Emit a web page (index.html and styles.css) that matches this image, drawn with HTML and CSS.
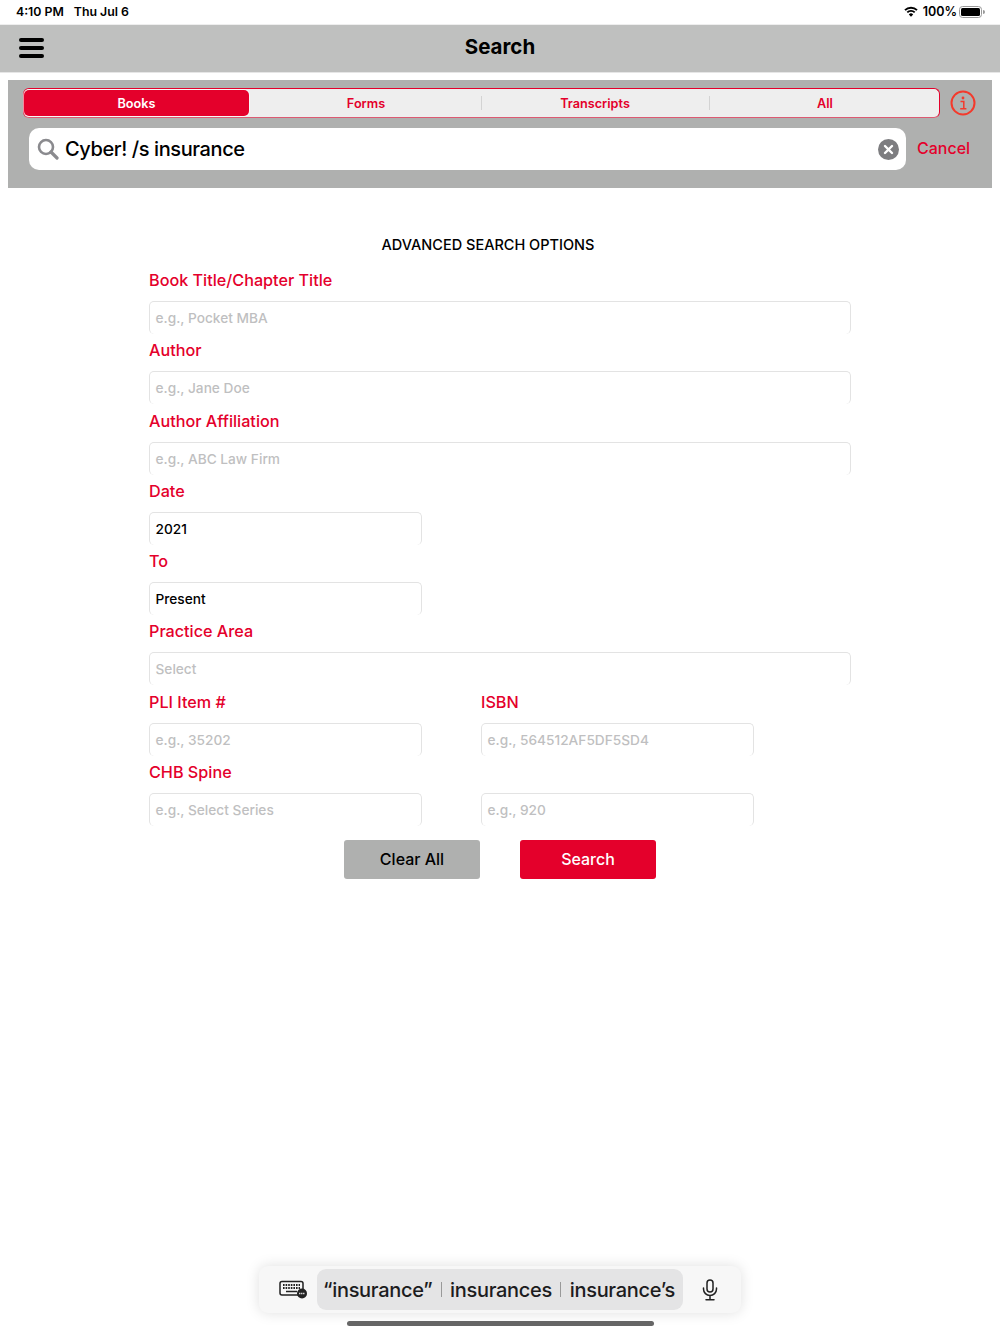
FILE: index.html
```html
<!DOCTYPE html>
<html lang="en">
  <head>
    <meta charset="UTF-8" />
    <meta name="viewport" content="width=device-width, initial-scale=1.0" />
    <title>Search</title>
    <link rel="stylesheet" href="styles.css">
  </head>
  <body>
    <div class="page">
      <div class="status-bar">
        <div class="status-left"><span>4:10 PM</span><span>Thu Jul 6</span></div>
        <div class="status-right">
          <svg class="wifi" width="14" height="11" viewBox="0 0 14 11">
            <path d="M1 4.2 A8.5 8.5 0 0 1 13 4.2" fill="none" stroke="#000" stroke-width="1.9"/>
            <path d="M3.3 6.4 A5.2 5.2 0 0 1 10.7 6.4" fill="none" stroke="#000" stroke-width="1.9"/>
            <path d="M7 10.8 L4.8 8.4 A3 3 0 0 1 9.2 8.4 Z" fill="#000"/>
          </svg>
          <span class="battery-text">100%</span>
          <svg class="battery" width="26" height="12" viewBox="0 0 26 12">
            <rect x="0.5" y="0.5" width="22" height="11" rx="3" fill="none" stroke="#999"/>
            <rect x="2" y="2" width="19" height="8" rx="1.5" fill="#000"/>
            <path d="M24 4 A2 2 0 0 1 24 8 Z" fill="#999"/>
          </svg>
        </div>
      </div>

      <div class="nav-bar">
        <div class="menu-icon"><span></span><span></span><span></span></div>
        <div class="nav-title">Search</div>
      </div>

      <div class="search-panel">
        <div class="tabs-row">
          <div class="tabs">
            <div class="tab active">Books</div>
            <div class="tab forms">Forms</div>
            <div class="tab divided">Transcripts</div>
            <div class="tab divided last">All</div>
          </div>
          <svg class="info-icon" width="26" height="26" viewBox="0 0 26 26">
            <circle cx="13" cy="13" r="11.5" fill="none" stroke="#f4392b" stroke-width="2"/>
            <circle cx="13" cy="8" r="1.4" fill="#f4392b"/>
            <path d="M10.5 11.5 H13.8 V18.5 M10.2 18.8 H16.4" fill="none" stroke="#f4392b" stroke-width="1.5"/>
          </svg>
        </div>
        <div class="search-row">
          <div class="search-field">
            <svg width="22" height="22" viewBox="0 0 22 22">
              <circle cx="9" cy="9" r="7" fill="none" stroke="#8a8a8e" stroke-width="2.6"/>
              <path d="M14 14 L20 20" stroke="#8a8a8e" stroke-width="3.2" stroke-linecap="round"/>
            </svg>
            <div class="search-text">Cyber! /s insurance</div>
            <svg width="21" height="21" viewBox="0 0 21 21">
              <circle cx="10.5" cy="10.5" r="10.5" fill="#7d7d80"/>
              <path d="M7 7 L14 14 M14 7 L7 14" stroke="#fff" stroke-width="2.4" stroke-linecap="round"/>
            </svg>
          </div>
          <div class="cancel">Cancel</div>
        </div>
      </div>

      <h1 class="adv-title">ADVANCED SEARCH OPTIONS</h1>

      <div class="adv-form">
        <div class="group full">
          <label>Book Title/Chapter Title</label>
          <div class="field placeholder">e.g., Pocket MBA</div>
        </div>
        <div class="group full">
          <label>Author</label>
          <div class="field placeholder">e.g., Jane Doe</div>
        </div>
        <div class="group full">
          <label>Author Affiliation</label>
          <div class="field placeholder">e.g., ABC Law Firm</div>
        </div>
        <div class="group">
          <label>Date</label>
          <div class="field">2021</div>
        </div>
        <div class="group">
          <label>To</label>
          <div class="field">Present</div>
        </div>
        <div class="group full">
          <label>Practice Area</label>
          <div class="field placeholder">Select</div>
        </div>
        <div class="pair">
          <div class="group">
            <label>PLI Item #</label>
            <div class="field placeholder">e.g., 35202</div>
          </div>
          <div class="group">
            <label>ISBN</label>
            <div class="field placeholder">e.g., 564512AF5DF5SD4</div>
          </div>
        </div>
        <div class="pair">
          <div class="group">
            <label>CHB Spine</label>
            <div class="field placeholder">e.g., Select Series</div>
          </div>
          <div class="group">
            <label>&nbsp;</label>
            <div class="field placeholder">e.g., 920</div>
          </div>
        </div>
      </div>

      <div class="actions">
        <button class="btn btn-clear">Clear All</button>
        <button class="btn btn-search">Search</button>
      </div>

      <div class="kb-bar">
        <svg width="30" height="20" viewBox="0 0 30 20">
          <rect x="1" y="1.5" width="23" height="13.5" rx="2" fill="none" stroke="#222" stroke-width="1.5"/>
          <path d="M4 5 H21 M4 8 H21" stroke="#222" stroke-width="1.8" stroke-dasharray="1.6 1"/>
          <path d="M7 11.5 H18" stroke="#222" stroke-width="1.5"/>
          <circle cx="23" cy="13.5" r="5" fill="#222"/>
          <path d="M20.2 13.5 H25.8" stroke="#fff" stroke-width="1.3" stroke-dasharray="1.2 .8"/>
        </svg>
        <div class="suggestions">
          <span>“insurance”</span>
          <i></i>
          <span>insurances</span>
          <i></i>
          <span>insurance’s</span>
        </div>
        <svg width="16" height="22" viewBox="0 0 16 22">
          <rect x="5" y="1" width="6" height="12" rx="3" fill="none" stroke="#222" stroke-width="1.5"/>
          <path d="M1.5 9 V10 A6.5 6.5 0 0 0 14.5 10 V9 M8 16.5 V20.5 M4 20.7 H12" fill="none" stroke="#222" stroke-width="1.5" stroke-linecap="round"/>
        </svg>
      </div>
      <div class="home-bar"></div>
    </div>
  </body>
</html>
```

FILE: styles.css
```css
body {
  margin: 0;
  font-family: Inter, "Liberation Sans", sans-serif;
  background-color: #fff;
  color: #000;
}

.page {
  height: 1334px;
  overflow: hidden;
  display: flex;
  flex-direction: column;
}

.status-bar {
  height: 24px;
  display: flex;
  justify-content: space-between;
  align-items: center;
  padding: 0 15px 1px 16px;
  box-sizing: border-box;
  font-size: 12.3px;
  font-weight: 600;
}

.status-left {
  display: flex;
  gap: 10px;
}

.status-right {
  display: flex;
  align-items: center;
  font-size: 12.5px;
}

.battery-text {
  margin: 0 2px 0 5px;
}

.nav-bar {
  height: 49px;
  background-color: #bfc0bf;
  border-top: 1px solid #eee;
  border-bottom: 1px solid #e6e6e6;
  box-sizing: border-box;
  display: flex;
  align-items: center;
  justify-content: center;
  position: relative;
}

.menu-icon {
  position: absolute;
  left: 19px;
  top: 13px;
  width: 25px;
  display: flex;
  flex-direction: column;
  gap: 4px;
}

.menu-icon span {
  height: 4px;
  background: #000;
  border-radius: 2px;
}

.nav-title {
  font-size: 20.5px;
  font-weight: 700;
  margin-bottom: 4px;
}

.search-panel {
  margin: 7px 8px 0;
  height: 108px;
  background-color: #afb0af;
  padding: 8px 0 0 15px;
  box-sizing: border-box;
}

.tabs-row {
  display: flex;
  align-items: center;
  gap: 10px;
}

.tabs {
  width: 917px;
  height: 30px;
  box-sizing: border-box;
  display: flex;
  background: #eeeeee;
  border: 1px solid #e4002b;
  border-bottom-color: #dc5a72;
  border-radius: 6px;
  padding: 1px 0;
}

.tab {
  flex: 1;
  display: flex;
  align-items: center;
  justify-content: center;
  color: #e4002b;
  font-size: 12.7px;
  font-weight: 600;
  position: relative;
}

.tab.forms {
  flex: 0 0 232px;
  box-sizing: border-box;
  padding-left: 2px;
}

.tab.last {
  padding-left: 2px;
}

.tab.active {
  flex: 0 0 225px;
  background: #e4002b;
  color: #fff;
  border-radius: 5px;
  box-shadow: 0 0 0 1px rgba(255, 255, 255, 0.55);
}

.tab.divided::before {
  content: "";
  position: absolute;
  left: 0;
  top: 6px;
  bottom: 6px;
  width: 1px;
  background: #d3d3d3;
}

.search-row {
  display: flex;
  align-items: center;
  margin: 10px 0 0 6px;
}

.search-field {
  width: 877px;
  height: 42px;
  box-sizing: border-box;
  background: #fff;
  border-radius: 10px;
  display: flex;
  align-items: center;
  padding: 0 7px 0 8px;
  gap: 6px;
}

.search-text {
  flex: 1;
  margin-bottom: 1px;
  font-size: 20px;
  font-weight: 500;
  letter-spacing: -0.4px;
}

.cancel {
  margin: 0 0 3px 11px;
  color: #e4002b;
  font-size: 16px;
  font-weight: 500;
}

.adv-title {
  margin: 48px 24px 0 0;
  text-align: center;
  font-size: 14.5px;
  line-height: 18px;
  font-weight: 500;
}

.adv-form {
  width: 702px;
  margin: 0 auto;
  display: flex;
  flex-direction: column;
  gap: 1.3px;
  padding-top: 11px;
}

.group {
  width: 273px;
}

.group.full {
  width: 702px;
}

.pair {
  display: flex;
  gap: 59px;
}

.group label {
  display: block;
  height: 36px;
  line-height: 31px;
  color: #e4002b;
  font-size: 16.2px;
  font-weight: 500;
}

.field {
  height: 33px;
  box-sizing: border-box;
  border: 1px solid #e3e3e3;
  border-bottom: none;
  border-radius: 5px;
  padding: 0 5.5px;
  line-height: 32px;
  font-size: 13.7px;
  font-weight: 500;
}

.field.placeholder {
  color: #bfbfc1;
}

.actions {
  display: flex;
  justify-content: center;
  gap: 40px;
  margin-top: 14px;
}

.btn {
  width: 136px;
  height: 39px;
  padding: 0 0 2px;
  border: none;
  border-radius: 3px;
  font-family: inherit;
  font-size: 16px;
  font-weight: 500;
}

.btn-clear {
  background-color: #afb0af;
  color: #000;
}

.btn-search {
  background-color: #e4002b;
  color: #fff;
}

.kb-bar {
  width: 482px;
  height: 47px;
  box-sizing: border-box;
  margin: auto auto 0;
  padding: 0 3px 0 20px;
  display: flex;
  align-items: center;
  background: #f7f7f7;
  border-radius: 9px;
  box-shadow: 0 0 14px rgba(0, 0, 0, 0.13);
}

.suggestions {
  width: 366px;
  height: 41px;
  box-sizing: border-box;
  margin: 0 19px 0 8px;
  padding: 0 8px 0 6px;
  display: flex;
  align-items: center;
  justify-content: space-between;
  background: #e4e4e5;
  border-radius: 9px;
  font-size: 20px;
  font-weight: 500;
  letter-spacing: -0.3px;
  color: #1c1c1e;
}

.suggestions i {
  width: 1px;
  height: 15px;
  background: #999;
}

.home-bar {
  width: 307px;
  height: 5px;
  margin: 8px auto 8px;
  background: #666;
  border-radius: 3px;
}
```
